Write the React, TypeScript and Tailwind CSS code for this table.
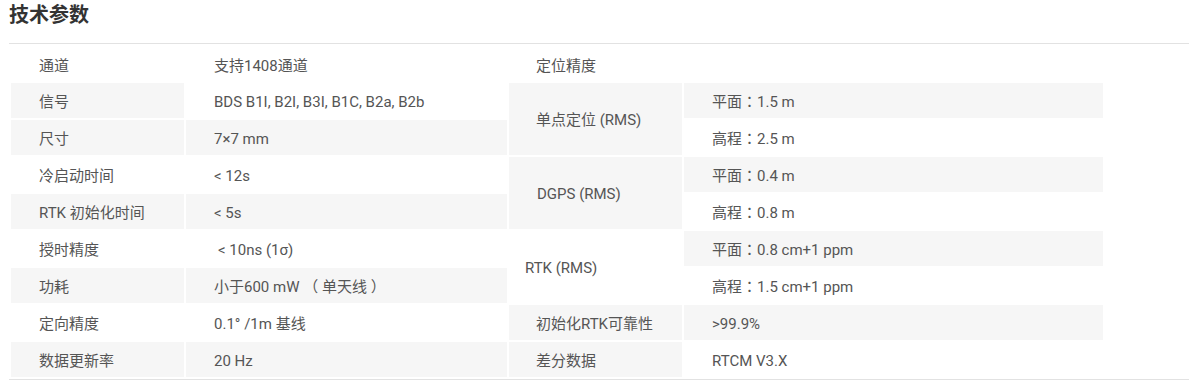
import React from 'react';

const gray = 'bg-[#f6f6f6]';

type Cell = {
  text: string;
  bg?: boolean;
  col: string;
  row: string;
  pad?: string;
  tc?: boolean;
};

const cells: Cell[] = [
  // left table
  { text: '通道', col: 'col-start-1', row: 'row-start-1' },
  { text: '支持1408通道', col: 'col-start-2', row: 'row-start-1' },
  { text: '信号', bg: true, col: 'col-start-1', row: 'row-start-2' },
  { text: 'BDS B1I, B2I, B3I, B1C, B2a, B2b', col: 'col-start-2', row: 'row-start-2' },
  { text: '尺寸', bg: true, col: 'col-start-1', row: 'row-start-3' },
  { text: '7×7 mm', bg: true, col: 'col-start-2', row: 'row-start-3' },
  { text: '冷启动时间', col: 'col-start-1', row: 'row-start-4' },
  { text: '< 12s', col: 'col-start-2', row: 'row-start-4' },
  { text: 'RTK 初始化时间', bg: true, col: 'col-start-1', row: 'row-start-5' },
  { text: '< 5s', bg: true, col: 'col-start-2', row: 'row-start-5' },
  { text: '授时精度', col: 'col-start-1', row: 'row-start-6' },
  { text: '< 10ns (1σ)', col: 'col-start-2', row: 'row-start-6', pad: 'pl-[32px]' },
  { text: '功耗', bg: true, col: 'col-start-1', row: 'row-start-7' },
  { text: '小于600 mW （ 单天线 ）', bg: true, col: 'col-start-2', row: 'row-start-7' },
  { text: '定向精度', col: 'col-start-1', row: 'row-start-8' },
  { text: '0.1° /1m 基线', col: 'col-start-2', row: 'row-start-8' },
  { text: '数据更新率', bg: true, col: 'col-start-1', row: 'row-start-9' },
  { text: '20 Hz', bg: true, col: 'col-start-2', row: 'row-start-9' },

  // right table
  { text: '定位精度', col: 'col-start-3 col-span-2', row: 'row-start-1', pad: 'pl-[27px]' },
  { text: '单点定位 (RMS)', bg: true, col: 'col-start-3', row: 'row-start-2 row-span-2', pad: 'pl-[27px]' },
  { text: '平面：1.5 m', bg: true, col: 'col-start-4', row: 'row-start-2', tc: true },
  { text: '高程：2.5 m', col: 'col-start-4', row: 'row-start-3', tc: true },
  { text: 'DGPS (RMS)', bg: true, col: 'col-start-3', row: 'row-start-4 row-span-2', pad: 'pl-[28px]' },
  { text: '平面：0.4 m', bg: true, col: 'col-start-4', row: 'row-start-4', tc: true },
  { text: '高程：0.8 m', col: 'col-start-4', row: 'row-start-5', tc: true },
  { text: 'RTK (RMS)', col: 'col-start-3', row: 'row-start-6 row-span-2', pad: 'pl-[16px]' },
  { text: '平面：0.8 cm+1 ppm', bg: true, col: 'col-start-4', row: 'row-start-6', tc: true },
  { text: '高程：1.5 cm+1 ppm', col: 'col-start-4', row: 'row-start-7', tc: true },
  { text: '初始化RTK可靠性', bg: true, col: 'col-start-3', row: 'row-start-8', pad: 'pl-[27px]' },
  { text: '>99.9%', bg: true, col: 'col-start-4', row: 'row-start-8' },
  { text: '差分数据', bg: true, col: 'col-start-3', row: 'row-start-9', pad: 'pl-[27px]' },
  { text: 'RTCM V3.X', col: 'col-start-4', row: 'row-start-9' },
];

function App() {
  return (
    <div className="w-[1197px] h-[383px] bg-white font-['Roboto','Noto_Sans_CJK_SC',sans-serif]">
      <div className="ml-[9px] w-[1180px]">
        <h2 className="h-[44px] pt-[3px] text-[20px] leading-[24px] font-bold text-[#333] border-b border-[#e2e2e2]">
          技术参数
        </h2>
        <div className="border-b border-[#e2e2e2] py-[2px] pl-[2px]">
          <div className="grid grid-cols-[173px_321px_173px_419px] grid-rows-[repeat(9,35px)] gap-[2px] text-[15px] text-[#555]">
            {cells.map((c, i) => (
              <div
                key={i}
                className={`${c.col} ${c.row} ${c.bg ? gray : 'bg-white'} ${c.pad ?? 'pl-[28px]'} ${c.row === 'row-start-1' ? 'pt-[6px]' : 'pt-[3px]'} ${c.tc ? "font-['Roboto','Noto_Sans_CJK_TC',sans-serif]" : ''} flex items-center whitespace-nowrap`}
              >
                {c.text}
              </div>
            ))}
          </div>
        </div>
      </div>
    </div>
  );
}

export default App;
